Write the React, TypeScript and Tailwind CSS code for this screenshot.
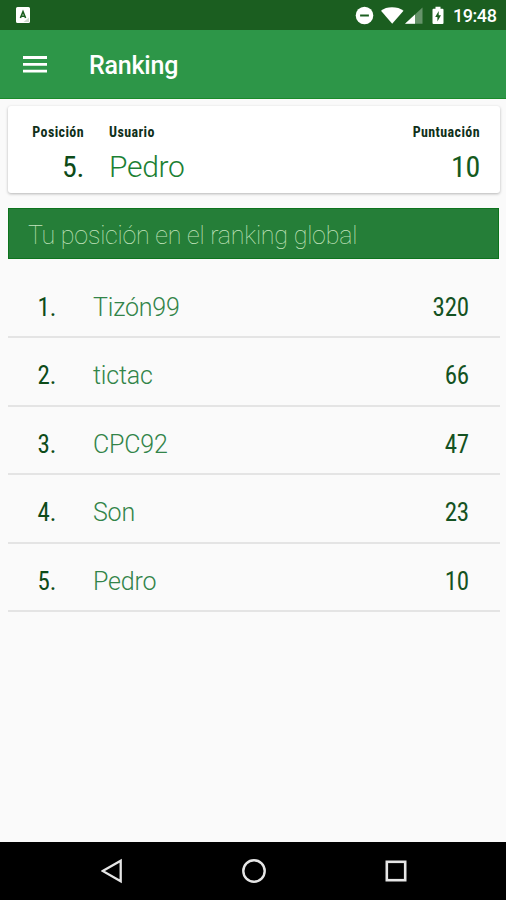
const rows = [
  { pos: '1.', name: 'Tizón99', score: '320' },
  { pos: '2.', name: 'tictac', score: '66' },
  { pos: '3.', name: 'CPC92', score: '47' },
  { pos: '4.', name: 'Son', score: '23' },
  { pos: '5.', name: 'Pedro', score: '10' },
];

const condensed = "font-['Roboto_Condensed','Roboto',sans-serif] [font-stretch:75%]";

function StatusBar() {
  return (
    <div className="flex h-[30px] items-center bg-[#1b5e20] pl-4 pr-[10px]">
      <svg width="14" height="16" viewBox="0 0 14 16">
        <path d="M1.5 0h11a1.5 1.5 0 0 1 1.5 1.5v13a1.5 1.5 0 0 1-1.5 1.5h-11A1.5 1.5 0 0 1 0 14.5v-13A1.5 1.5 0 0 1 1.5 0z" fill="#fff" />
        <path d="M4.4 11 7 4.7 9.6 11M5.5 9.3h3" fill="none" stroke="#1b5e20" strokeWidth="1.6" />
        <path d="M7.5 15 13 10.5v4.5z" fill="#cfdccf" />
      </svg>
      <div className="ml-auto flex w-[141px] items-center">
        <svg className="shrink-0" width="92" height="20" viewBox="0 0 92 20">
          <circle cx="9.500" cy="10.500" r="8.800" fill="#fff" />
          <path d="M5.100 10.500h8.800" stroke="#1b5e20" strokeWidth="2" />
          <path d="M26 5.700C29 3.300 32.500 2.200 37 2.200s8.500 1.100 11.500 3.500L37.200 18.700z" fill="#fff" />
          <path d="M67.500 2.500V18.700H50z" fill="#66936a" />
          <path d="M60 9.500v9.200H50z" fill="#fff" />
          <path d="M85.500 1.700h-5v2H78.500a1 1 0 0 0-1 1v13.300a1 1 0 0 0 1 1h9a1 1 0 0 0 1-1V4.700a1 1 0 0 0-1-1h-2z" fill="#fff" />
          <path d="M83.700 6 80.200 12H82.400V16.500L86 10.300H83.700z" fill="#1b5e20" />
        </svg>
        <span className="ml-[6px] mt-[2px] whitespace-nowrap text-[18px] font-medium leading-none tracking-[-0.450px] text-white">19:48</span>
      </div>
    </div>
  );
}

export default function App() {
  return (
    <div className="flex h-[900px] w-[506px] flex-col overflow-hidden bg-[#fafafa] font-['Roboto',sans-serif]">
      <StatusBar />
      <header className="flex h-[69px] items-center border-b border-[#198a29] bg-[#2d9648] pl-[23px]">
        <svg width="24" height="18" viewBox="0 0 24 18">
          <path d="M0 2.500h24M0 9.300h24M0 16.100h24" stroke="#fff" strokeWidth="2.800" />
        </svg>
        <h1 className="ml-[42px] mt-[3px] text-[25px] font-medium leading-none tracking-[-0.200px] text-white">Ranking</h1>
      </header>
      <main className="flex-1 pl-[8px] pr-[6px] pt-[7px]">
        <section className="h-[87px] rounded-[3px] bg-white px-[20px] pt-[19px] shadow-[0_1px_3px_rgba(0,0,0,0.28)]">
          <div className={`flex text-[14px] font-bold leading-[14px] tracking-[0.400px] text-[#10301a] ${condensed}`}>
            <span className="w-[56px] text-right">Posición</span>
            <span className="ml-[25px]">Usuario</span>
            <span className="ml-auto">Puntuación</span>
          </div>
          <div className="mt-[13px] flex text-[30px] leading-[30px]">
            <span className={`w-[56px] text-right tracking-[-0.300px] text-[#0d4b18] ${condensed}`}>5.</span>
            <span className="ml-[25px] font-light tracking-[-0.300px] text-[#1b8033]">Pedro</span>
            <span className={`ml-auto tracking-[-0.300px] text-[#145a20] ${condensed}`}>10</span>
          </div>
        </section>
        <h2 className="mt-[15px] h-[51px] w-[491px] whitespace-nowrap border border-[#0d731d] bg-[#257e38] pl-[19px] text-[25px] font-[270] leading-[53px] tracking-[-0.200px] text-[#c3e4bd]">
          Tu posición en el ranking global
        </h2>
        <ul className="pt-[10.500px]">
          {rows.map((r) => (
            <li key={r.pos} className="flex h-[68.500px] items-center border-b-2 border-[#e4e4e4] pl-[29.500px] pr-[31px] pt-[9.500px] text-[25px]">
              <span className={`w-[55.500px] text-[#0d4b18] ${condensed}`}>{r.pos}</span>
              <span className="font-light tracking-[-0.200px] text-[#328449]">{r.name}</span>
              <span className={`ml-auto tracking-[-0.200px] text-[#145222] ${condensed}`}>{r.score}</span>
            </li>
          ))}
        </ul>
      </main>
      <nav className="flex h-[58px] items-center justify-between bg-black pl-[101px] pr-[99px]">
        <svg width="22" height="26" viewBox="0 0 22 26">
          <path d="M1.700 13 19.700 2.700v20.600z" fill="none" stroke="#e6e6e6" strokeWidth="2.300" />
        </svg>
        <svg width="26" height="26" viewBox="0 0 26 26">
          <circle cx="13" cy="13" r="10.700" fill="none" stroke="#e6e6e6" strokeWidth="2.400" />
        </svg>
        <svg width="22" height="22" viewBox="0 0 22 22">
          <rect x="1.800" y="1.800" width="18.400" height="18.400" fill="none" stroke="#e6e6e6" strokeWidth="2.600" />
        </svg>
      </nav>
    </div>
  );
}
